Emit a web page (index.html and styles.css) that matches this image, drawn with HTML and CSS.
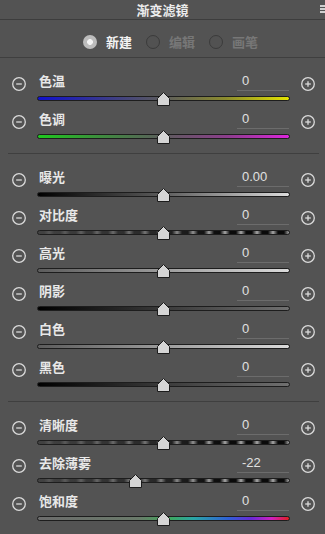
FILE: index.html
```html
<!DOCTYPE html>
<html lang="zh-CN">
<head>
<meta charset="utf-8">
<title>渐变滤镜</title>
<link rel="stylesheet" href="styles.css">
</head>
<body>
<div class="panel">
  <header class="titlebar">
    <span class="title">渐变滤镜</span>
    <span class="menu"><i></i><i></i><i></i></span>
  </header>

  <div class="modes">
    <label class="mode"><span class="radio on"></span><span class="mode-text on">新建</span></label>
    <label class="mode"><span class="radio"></span><span class="mode-text">编辑</span></label>
    <label class="mode"><span class="radio"></span><span class="mode-text">画笔</span></label>
  </div>

  <section class="group">
    <div class="row">
      <svg class="step" viewBox="0 0 14 14"><circle cx="7" cy="7" r="6.3"/><line x1="4.2" y1="7" x2="9.8" y2="7"/></svg>
      <div class="head"><span class="label">色温</span><span class="value">0</span></div>
      <div class="trackwrap"><div class="track t-temp"></div><svg class="thumb" style="--pos:50%" viewBox="0 0 13 14"><polygon points="6.5,0.5 12.5,6.5 12.5,13.5 0.5,13.5 0.5,6.5"/></svg></div>
      <svg class="step" viewBox="0 0 14 14"><circle cx="7" cy="7" r="6.3"/><line x1="4.2" y1="7" x2="9.8" y2="7"/><line x1="7" y1="4.2" x2="7" y2="9.8"/></svg>
    </div>
    <div class="row">
      <svg class="step" viewBox="0 0 14 14"><circle cx="7" cy="7" r="6.3"/><line x1="4.2" y1="7" x2="9.8" y2="7"/></svg>
      <div class="head"><span class="label">色调</span><span class="value">0</span></div>
      <div class="trackwrap"><div class="track t-tint"></div><svg class="thumb" style="--pos:50%" viewBox="0 0 13 14"><polygon points="6.5,0.5 12.5,6.5 12.5,13.5 0.5,13.5 0.5,6.5"/></svg></div>
      <svg class="step" viewBox="0 0 14 14"><circle cx="7" cy="7" r="6.3"/><line x1="4.2" y1="7" x2="9.8" y2="7"/><line x1="7" y1="4.2" x2="7" y2="9.8"/></svg>
    </div>
  </section>
  <div class="sep"></div>

  <section class="group">
    <div class="row">
      <svg class="step" viewBox="0 0 14 14"><circle cx="7" cy="7" r="6.3"/><line x1="4.2" y1="7" x2="9.8" y2="7"/></svg>
      <div class="head"><span class="label">曝光</span><span class="value">0.00</span></div>
      <div class="trackwrap"><div class="track t-exposure"></div><svg class="thumb" style="--pos:50%" viewBox="0 0 13 14"><polygon points="6.5,0.5 12.5,6.5 12.5,13.5 0.5,13.5 0.5,6.5"/></svg></div>
      <svg class="step" viewBox="0 0 14 14"><circle cx="7" cy="7" r="6.3"/><line x1="4.2" y1="7" x2="9.8" y2="7"/><line x1="7" y1="4.2" x2="7" y2="9.8"/></svg>
    </div>
    <div class="row">
      <svg class="step" viewBox="0 0 14 14"><circle cx="7" cy="7" r="6.3"/><line x1="4.2" y1="7" x2="9.8" y2="7"/></svg>
      <div class="head"><span class="label">对比度</span><span class="value">0</span></div>
      <div class="trackwrap"><div class="track t-pattern"></div><svg class="thumb" style="--pos:50%" viewBox="0 0 13 14"><polygon points="6.5,0.5 12.5,6.5 12.5,13.5 0.5,13.5 0.5,6.5"/></svg></div>
      <svg class="step" viewBox="0 0 14 14"><circle cx="7" cy="7" r="6.3"/><line x1="4.2" y1="7" x2="9.8" y2="7"/><line x1="7" y1="4.2" x2="7" y2="9.8"/></svg>
    </div>
    <div class="row">
      <svg class="step" viewBox="0 0 14 14"><circle cx="7" cy="7" r="6.3"/><line x1="4.2" y1="7" x2="9.8" y2="7"/></svg>
      <div class="head"><span class="label">高光</span><span class="value">0</span></div>
      <div class="trackwrap"><div class="track t-light"></div><svg class="thumb" style="--pos:50%" viewBox="0 0 13 14"><polygon points="6.5,0.5 12.5,6.5 12.5,13.5 0.5,13.5 0.5,6.5"/></svg></div>
      <svg class="step" viewBox="0 0 14 14"><circle cx="7" cy="7" r="6.3"/><line x1="4.2" y1="7" x2="9.8" y2="7"/><line x1="7" y1="4.2" x2="7" y2="9.8"/></svg>
    </div>
    <div class="row">
      <svg class="step" viewBox="0 0 14 14"><circle cx="7" cy="7" r="6.3"/><line x1="4.2" y1="7" x2="9.8" y2="7"/></svg>
      <div class="head"><span class="label">阴影</span><span class="value">0</span></div>
      <div class="trackwrap"><div class="track t-dark"></div><svg class="thumb" style="--pos:50%" viewBox="0 0 13 14"><polygon points="6.5,0.5 12.5,6.5 12.5,13.5 0.5,13.5 0.5,6.5"/></svg></div>
      <svg class="step" viewBox="0 0 14 14"><circle cx="7" cy="7" r="6.3"/><line x1="4.2" y1="7" x2="9.8" y2="7"/><line x1="7" y1="4.2" x2="7" y2="9.8"/></svg>
    </div>
    <div class="row">
      <svg class="step" viewBox="0 0 14 14"><circle cx="7" cy="7" r="6.3"/><line x1="4.2" y1="7" x2="9.8" y2="7"/></svg>
      <div class="head"><span class="label">白色</span><span class="value">0</span></div>
      <div class="trackwrap"><div class="track t-light"></div><svg class="thumb" style="--pos:50%" viewBox="0 0 13 14"><polygon points="6.5,0.5 12.5,6.5 12.5,13.5 0.5,13.5 0.5,6.5"/></svg></div>
      <svg class="step" viewBox="0 0 14 14"><circle cx="7" cy="7" r="6.3"/><line x1="4.2" y1="7" x2="9.8" y2="7"/><line x1="7" y1="4.2" x2="7" y2="9.8"/></svg>
    </div>
    <div class="row">
      <svg class="step" viewBox="0 0 14 14"><circle cx="7" cy="7" r="6.3"/><line x1="4.2" y1="7" x2="9.8" y2="7"/></svg>
      <div class="head"><span class="label">黑色</span><span class="value">0</span></div>
      <div class="trackwrap"><div class="track t-dark"></div><svg class="thumb" style="--pos:50%" viewBox="0 0 13 14"><polygon points="6.5,0.5 12.5,6.5 12.5,13.5 0.5,13.5 0.5,6.5"/></svg></div>
      <svg class="step" viewBox="0 0 14 14"><circle cx="7" cy="7" r="6.3"/><line x1="4.2" y1="7" x2="9.8" y2="7"/><line x1="7" y1="4.2" x2="7" y2="9.8"/></svg>
    </div>
  </section>
  <div class="sep"></div>

  <section class="group">
    <div class="row">
      <svg class="step" viewBox="0 0 14 14"><circle cx="7" cy="7" r="6.3"/><line x1="4.2" y1="7" x2="9.8" y2="7"/></svg>
      <div class="head"><span class="label">清晰度</span><span class="value">0</span></div>
      <div class="trackwrap"><div class="track t-pattern"></div><svg class="thumb" style="--pos:50%" viewBox="0 0 13 14"><polygon points="6.5,0.5 12.5,6.5 12.5,13.5 0.5,13.5 0.5,6.5"/></svg></div>
      <svg class="step" viewBox="0 0 14 14"><circle cx="7" cy="7" r="6.3"/><line x1="4.2" y1="7" x2="9.8" y2="7"/><line x1="7" y1="4.2" x2="7" y2="9.8"/></svg>
    </div>
    <div class="row">
      <svg class="step" viewBox="0 0 14 14"><circle cx="7" cy="7" r="6.3"/><line x1="4.2" y1="7" x2="9.8" y2="7"/></svg>
      <div class="head"><span class="label">去除薄雾</span><span class="value">-22</span></div>
      <div class="trackwrap"><div class="track t-pattern"></div><svg class="thumb" style="--pos:39%" viewBox="0 0 13 14"><polygon points="6.5,0.5 12.5,6.5 12.5,13.5 0.5,13.5 0.5,6.5"/></svg></div>
      <svg class="step" viewBox="0 0 14 14"><circle cx="7" cy="7" r="6.3"/><line x1="4.2" y1="7" x2="9.8" y2="7"/><line x1="7" y1="4.2" x2="7" y2="9.8"/></svg>
    </div>
    <div class="row">
      <svg class="step" viewBox="0 0 14 14"><circle cx="7" cy="7" r="6.3"/><line x1="4.2" y1="7" x2="9.8" y2="7"/></svg>
      <div class="head"><span class="label">饱和度</span><span class="value">0</span></div>
      <div class="trackwrap"><div class="track t-sat"></div><svg class="thumb" style="--pos:50%" viewBox="0 0 13 14"><polygon points="6.5,0.5 12.5,6.5 12.5,13.5 0.5,13.5 0.5,6.5"/></svg></div>
      <svg class="step" viewBox="0 0 14 14"><circle cx="7" cy="7" r="6.3"/><line x1="4.2" y1="7" x2="9.8" y2="7"/><line x1="7" y1="4.2" x2="7" y2="9.8"/></svg>
    </div>
  </section>
</div>
</body>
</html>
```

FILE: styles.css
```css
* { box-sizing: border-box; }

html, body {
  margin: 0;
  padding: 0;
}

body {
  width: 325px;
  height: 534px;
  overflow: hidden;
  background: #535353;
  font-family: "Noto Sans CJK SC", "Liberation Sans", sans-serif;
  color: #e4e4e4;
}

.panel {
  width: 325px;
}

/* title bar */
.titlebar {
  height: 20px;
  border-bottom: 1px solid #3d3d3d;
  display: grid;
  grid-template-columns: 1fr auto 1fr;
  align-items: center;
}

.title {
  grid-column: 2;
  font-size: 13px;
  font-weight: 700;
  line-height: 19px;
  color: #ececec;
}

.menu {
  grid-column: 3;
  justify-self: end;
  align-self: start;
  margin-top: 5px;
  width: 5px;
  display: flex;
  flex-direction: column;
  gap: 1.5px;
}

.menu i {
  display: block;
  height: 1.5px;
  background: #cfcfcf;
}

/* mode radios */
.modes {
  height: 38px;
  padding: 6px 0 0 16px;
  display: flex;
  justify-content: center;
  align-items: center;
  gap: 14px;
  border-bottom: 1px solid #3f3f3f;
}

.mode {
  display: flex;
  align-items: center;
  gap: 9px;
}

.radio {
  width: 14px;
  height: 14px;
  border-radius: 50%;
  border: 1px solid #3b3b3b;
  background: #525252;
}

.radio.on {
  border: none;
  background: radial-gradient(circle, #f4f4f4 0 2.6px, #bdbdbd 3.2px 100%);
}

.mode-text {
  font-size: 13px;
  line-height: 18px;
  font-weight: 600;
  color: #777777;
}

.mode-text.on {
  font-weight: 700;
  color: #f2f2f2;
}

/* groups */
.group {
  padding: 13px 0 6px;
}

.sep {
  height: 1px;
  margin: 0 6px 0 8px;
  background: #3f3f3f;
}

.row {
  display: grid;
  grid-template-columns: 37px 253px 1fr;
  grid-template-rows: 20px 18px;
}

.step {
  grid-row: 1 / 3;
  align-self: start;
  justify-self: center;
  margin-top: 6px;
  width: 14px;
  height: 14px;
  fill: none;
  stroke: #dadada;
  stroke-width: 1.3;
}

.head {
  grid-column: 2;
  grid-row: 1;
  display: flex;
  justify-content: space-between;
  align-items: center;
  padding: 0 1px 0 2px;
}

.label {
  font-size: 13px;
  line-height: 20px;
  font-weight: 600;
  color: #e8e8e8;
}

.value {
  width: 52px;
  height: 20px;
  padding-left: 5px;
  border-bottom: 1px solid #6c6c6c;
  font-family: "Liberation Sans", Arial, sans-serif;
  font-size: 13px;
  line-height: 19px;
  color: #e0e0e0;
}

.trackwrap {
  grid-column: 2;
  grid-row: 2;
  position: relative;
  padding-top: 5px;
}

.track {
  height: 5px;
  border: 1px solid #1d1d1d;
  border-radius: 3px;
}

.thumb {
  position: absolute;
  top: 1px;
  left: calc(var(--pos) - 6.5px);
  width: 13px;
  height: 14px;
  fill: #d5d5d5;
  stroke: #1c1c1c;
  stroke-width: 1;
}

/* track gradients */
.t-temp {
  background: linear-gradient(90deg, #1010cc 0%, #363690 25%, #5c5c5c 50%, #8c8c2e 75%, #e4e400 100%);
}

.t-tint {
  background: linear-gradient(90deg, #1ec81e 0%, #3e8c3e 25%, #5c5c5c 50%, #8c3e8c 75%, #dc26dc 100%);
}

.t-exposure {
  background: linear-gradient(90deg, #000 0%, #5c5c5c 50%, #dcdcdc 100%);
}

.t-light {
  background: linear-gradient(90deg, #5c5c5c 0%, #9c9c9c 50%, #dadada 100%);
}

.t-dark {
  background: linear-gradient(90deg, #000 0%, #3a3a3a 50%, #707070 100%);
}

.t-pattern {
  background:
    linear-gradient(90deg, rgba(72,72,72,0.9) 0%, rgba(72,72,72,0.5) 45%, rgba(72,72,72,0) 75%),
    repeating-linear-gradient(90deg, #0a0a0a 0px, #0a0a0a 6px, #a8a8a8 11px, #0a0a0a 16px);
}

.t-sat {
  background: linear-gradient(90deg, #6c6c6c 0%, #6a7a6a 40%, #3fa85a 52%, #2aa6a6 62%, #2f5fd6 76%, #6a2ad6 85%, #d020c0 93%, #e02020 100%);
}
```
